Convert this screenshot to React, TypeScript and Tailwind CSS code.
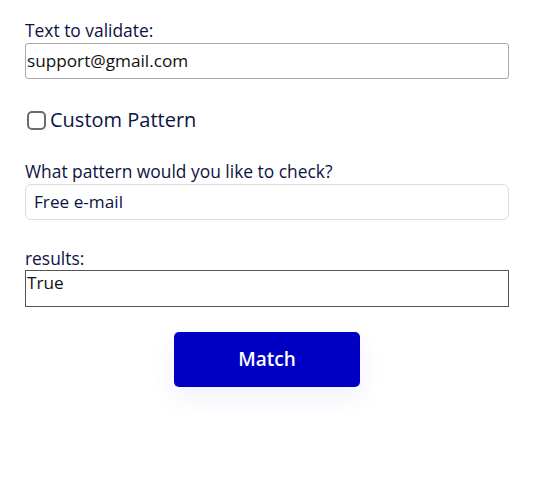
export default function App() {
  return (
    <div className="w-[534px] h-[500px] bg-white text-[#0b1443]" style={{ fontFamily: '"Open Sans", sans-serif' }}>
      <div className="pl-[25px] pr-[25px] pt-[18px] flex flex-col">
        <div className="text-[17.4px] leading-[24px]">Text to validate:</div>
        <div className="mt-[1px] h-[36px] border border-[#a9a9a9] rounded-[3px] flex items-center pl-[1px] text-[17.2px] text-[#111]">
          support@gmail.com
        </div>
        <div className="mt-[27px] h-[28px] flex items-center">
          <div className="ml-[2px] w-[19px] h-[19px] border-2 border-[#6b6b6b] rounded-[5px]" />
          <span className="ml-[4px] text-[20px] leading-[28px]">Custom Pattern</span>
        </div>
        <div className="mt-[25px] text-[17.4px] leading-[24px]">What pattern would you like to check?</div>
        <div className="mt-[1px] h-[36px] border border-[#dcdce0] rounded-[6px] flex items-center pl-[8px] text-[17.2px]">
          Free e-mail
        </div>
        <div className="mt-[26px] text-[17.4px] leading-[24px]">results:</div>
        <div className="h-[37px] border border-[#555] pl-[1px] text-[17.2px] leading-[24px] text-[#111]">
          True
        </div>
        <div className="mt-[25px] flex justify-center">
          <button className="w-[186px] h-[55px] bg-[#0000c4] rounded-[5px] text-white text-[19px] font-semibold shadow-[0_10px_25px_rgba(60,60,220,0.08)]">
            Match
          </button>
        </div>
      </div>
    </div>
  );
}
